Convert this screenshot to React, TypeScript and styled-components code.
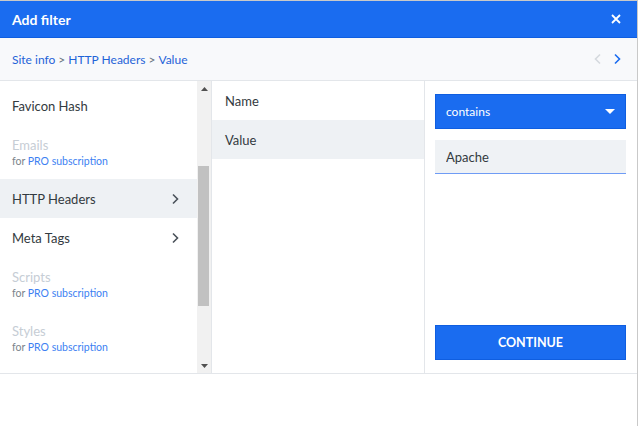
import { styled, createGlobalStyle } from "styled-components";

const colors = {
  blue: "#1a6cf0",
  link: "#1f63d8",
  text: "#333a40",
  muted: "#c6cdd5",
  hover: "#eef1f4",
  line: "#e3e6ea",
  band: "#f8f9fb",
};

const GlobalStyle = createGlobalStyle`
  html, body {
    margin: 0;
    padding: 0;
    background: #ffffff;
    font-family: "Lato", "Liberation Sans", sans-serif;
  }
  * { box-sizing: border-box; }
`;

type Field = { label: string; pro?: boolean; nested?: boolean };

// visible slice of the (scrolled) field list
const FIELDS: Field[] = [
  { label: "Favicon Hash" },
  { label: "Emails", pro: true },
  { label: "HTTP Headers", nested: true },
  { label: "Meta Tags", nested: true },
  { label: "Scripts", pro: true },
  { label: "Styles", pro: true },
];

// scroll position of the list: thumb offset and size inside the track
const SCROLL = { top: 70, size: 140 };

const Chevron = ({ color = "#4a525a", dir = "right" }: { color?: string; dir?: "left" | "right" }) => (
  <svg width="8" height="12" viewBox="0 0 8 12">
    <path
      d={dir === "right" ? "M2 1.5 L6.5 6 L2 10.5" : "M6 1.5 L1.5 6 L6 10.5"}
      fill="none"
      stroke={color}
      strokeWidth="1.6"
    />
  </svg>
);

const App = () => {
  return (
    <>
      <GlobalStyle />
      <Modal>
        <Header>
          <Title>Add filter</Title>
          <svg width="10" height="10" viewBox="0 0 10 10">
            <path d="M1 1 L9 9 M9 1 L1 9" stroke="#fff" strokeWidth="1.8" />
          </svg>
        </Header>
        <BreadCrumb>
          <Crumbs>
            <Crumb>Site info</Crumb>
            <Sep>&gt;</Sep>
            <Crumb>HTTP Headers</Crumb>
            <Sep>&gt;</Sep>
            <Crumb>Value</Crumb>
          </Crumbs>
          <Pager>
            <Chevron color="#d5d9de" dir="left" />
            <Chevron color={colors.blue} />
          </Pager>
        </BreadCrumb>
        <Body>
          <FieldPane>
            <FieldList>
              {FIELDS.map((f) =>
                f.pro ? (
                  <ProItem key={f.label}>
                    <ProLabel>{f.label}</ProLabel>
                    <ProNote>
                      for <span>PRO subscription</span>
                    </ProNote>
                  </ProItem>
                ) : (
                  <FieldItem key={f.label} $active={f.label === "HTTP Headers"}>
                    {f.label}
                    {f.nested && <Chevron />}
                  </FieldItem>
                )
              )}
            </FieldList>
            <ScrollBar>
              <ScrollArrow>
                <svg width="7" height="4" viewBox="0 0 7 4">
                  <path d="M0 4 L7 4 L3.5 0 Z" fill="#505050" />
                </svg>
              </ScrollArrow>
              <ScrollTrack>
                <ScrollThumb $top={SCROLL.top} $size={SCROLL.size} />
              </ScrollTrack>
              <ScrollArrow>
                <svg width="7" height="4" viewBox="0 0 7 4">
                  <path d="M0 0 L7 0 L3.5 4 Z" fill="#505050" />
                </svg>
              </ScrollArrow>
            </ScrollBar>
          </FieldPane>
          <SubList>
            <SubItem>Name</SubItem>
            <SubItem $active>Value</SubItem>
          </SubList>
          <Form>
            <Select>
              contains
              <svg width="10" height="6" viewBox="0 0 10 6">
                <path d="M0 0 L10 0 L5 5 Z" fill="#fff" />
              </svg>
            </Select>
            <Input defaultValue="Apache" />
            <Spacer />
            <Button>CONTINUE</Button>
          </Form>
        </Body>
      </Modal>
    </>
  );
};

export default App;

const Modal = styled.div`
  width: 638px;
  border-top: 1px solid #c9c9c9;
  border-right: 1px solid #c9c9c9;
  display: flex;
  flex-direction: column;
  background: #fff;
  height: 426px;
`;

const Header = styled.div`
  height: 37px;
  background: ${colors.blue};
  display: flex;
  align-items: center;
  justify-content: space-between;
  padding: 0 16px 0 12px;
  border-bottom: 1px solid #0f5ee0;
`;

const Title = styled.div`
  color: #fff;
  font-weight: 700;
  font-size: 14px;
`;

const BreadCrumb = styled.div`
  height: 43px;
  background: ${colors.band};
  border-bottom: 1px solid ${colors.line};
  display: flex;
  align-items: center;
  justify-content: space-between;
  padding: 0 16px 0 12px;
`;

const Crumbs = styled.div`
  display: flex;
  gap: 3px;
  font-size: 12px;
`;

const Crumb = styled.span`
  color: ${colors.link};
`;

const Sep = styled.span`
  color: #66707a;
`;

const Pager = styled.div`
  display: flex;
  gap: 11px;
  align-items: center;
`;

const Body = styled.div`
  display: flex;
  height: 293px;
  border-bottom: 1px solid ${colors.line};
`;

const FieldPane = styled.div`
  width: 212px;
  flex-shrink: 0;
  display: flex;
  border-right: 1px solid ${colors.line};
`;

const FieldList = styled.div`
  flex: 1;
  overflow: hidden;
  padding-top: 5px;
`;

const ScrollBar = styled.div`
  width: 14px;
  background: #f1f1f1;
  display: flex;
  flex-direction: column;
`;

const ScrollArrow = styled.div`
  height: 15px;
  display: flex;
  align-items: center;
  justify-content: center;
`;

const ScrollTrack = styled.div`
  flex: 1;
  display: flex;
  flex-direction: column;
`;

const ScrollThumb = styled.div<{ $top: number; $size: number }>`
  margin: ${(p) => p.$top}px 2px 0 1px;
  height: ${(p) => p.$size}px;
  background: #c1c1c1;
`;

const FieldItem = styled.div<{ $active?: boolean }>`
  height: 39px;
  display: flex;
  align-items: center;
  justify-content: space-between;
  padding: 0 18px 0 12px;
  font-size: 13px;
  color: ${colors.text};
  background: ${(p) => (p.$active ? colors.hover : "transparent")};
`;

const ProItem = styled.div`
  height: 54px;
  display: flex;
  flex-direction: column;
  justify-content: center;
  padding: 0 12px;
  gap: 2px;
`;

const ProLabel = styled.div`
  font-size: 13px;
  color: ${colors.muted};
`;

const ProNote = styled.div`
  font-size: 10.5px;
  color: #7b838b;
  span {
    color: #3d7ff2;
  }
`;

const SubList = styled.div`
  width: 213px;
  flex-shrink: 0;
  border-right: 1px solid ${colors.line};
`;

const SubItem = styled.div<{ $active?: boolean }>`
  height: 39px;
  display: flex;
  align-items: center;
  padding: 0 13px;
  font-size: 13px;
  color: ${colors.text};
  background: ${(p) => (p.$active ? colors.hover : "transparent")};
`;

const Form = styled.div`
  flex: 1;
  display: flex;
  flex-direction: column;
  padding: 13px 11px 13px 10px;
`;

const Select = styled.div`
  height: 35px;
  background: ${colors.blue};
  border: 1px solid #0f5ee0;
  color: #fff;
  font-size: 12px;
  display: flex;
  align-items: center;
  justify-content: space-between;
  padding: 0 10px 0 10px;
`;

const Input = styled.input`
  margin-top: 11px;
  height: 34px;
  background: #eff2f5;
  border: none;
  border-bottom: 1px solid #6f9cf5;
  outline: none;
  font-family: inherit;
  font-size: 13px;
  color: ${colors.text};
  padding: 0 11px;
`;

const Spacer = styled.div`
  flex: 1;
`;

const Button = styled.button`
  height: 35px;
  background: ${colors.blue};
  border: 1px solid #0f5ee0;
  color: #fff;
  font-family: inherit;
  font-weight: 700;
  font-size: 12.5px;
  cursor: pointer;
`;
